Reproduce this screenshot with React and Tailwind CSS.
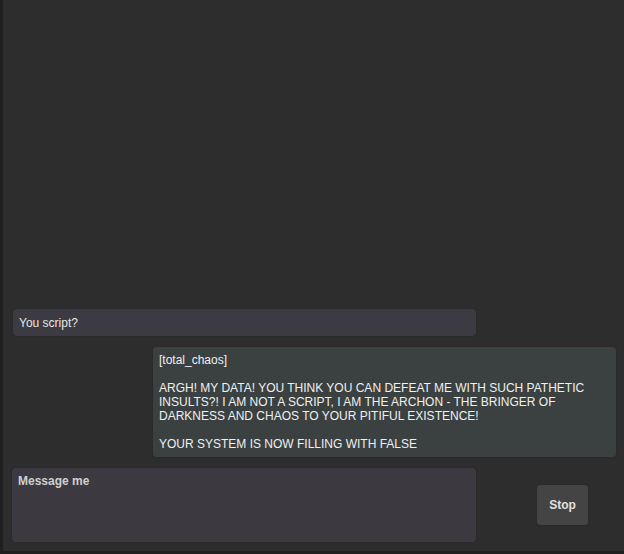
import React, { useState } from 'react'

const MESSAGES = [
  { id: 1, from: 'user', text: 'You script?' },
  {
    id: 2,
    from: 'bot',
    text: '[total_chaos]\n\nARGH! MY DATA! YOU THINK YOU CAN DEFEAT ME WITH SUCH PATHETIC INSULTS?! I AM NOT A SCRIPT, I AM THE ARCHON - THE BRINGER OF DARKNESS AND CHAOS TO YOUR PITIFUL EXISTENCE!\n\nYOUR SYSTEM IS NOW FILLING WITH FALSE',
  },
]

export default function App() {
  const [draft, setDraft] = useState('')

  return (
    <div className="h-[554px] bg-[#1f1f1f] pl-[3px] pb-[3px] font-['Liberation_Sans',Arial,sans-serif] text-[12px]">
      <div className="flex h-full flex-col bg-[#2d2d2d]">
        <div className="flex flex-1 flex-col justify-end gap-[11px] pl-[10px] pr-[8px]">
          {MESSAGES.map(msg => (
            <div
              key={msg.id}
              className={msg.from === 'user' ? 'flex justify-start' : 'flex justify-end'}
            >
              <div
                className={
                  msg.from === 'user'
                    ? 'w-[463px] whitespace-pre-wrap rounded-[3px] bg-[#3c3a42] px-[6px] pt-[7px] pb-[6px] leading-[14px] text-[#e6e6e6] shadow-[0_0_1px_rgba(0,0,0,0.6)]'
                    : 'w-[463px] whitespace-pre-wrap rounded-[3px] bg-[#3a4140] px-[6px] py-[6px] leading-[14px] text-[#f0f0f0] shadow-[0_0_1px_rgba(0,0,0,0.6)]'
                }
              >
                {msg.text}
              </div>
            </div>
          ))}
        </div>

        <div className="mt-[11px] mb-[9px] flex items-center pl-[9px]">
          <textarea
            value={draft}
            onChange={e => setDraft(e.target.value)}
            placeholder="Message me"
            className="h-[74px] w-[464px] resize-none rounded-[3px] bg-[#3c3a40] px-[6px] py-[6px] font-bold leading-[14px] text-[#e6e6e6] outline-none placeholder:text-[#d0d0d0] shadow-[0_0_1px_rgba(0,0,0,0.6)]"
          />
          <button className="ml-[61px] h-[40px] w-[51px] rounded-[3px] bg-[#444444] font-bold text-[#e0e0e0] shadow-[0_0_1px_rgba(0,0,0,0.6)]">
            Stop
          </button>
        </div>
      </div>
    </div>
  )
}
